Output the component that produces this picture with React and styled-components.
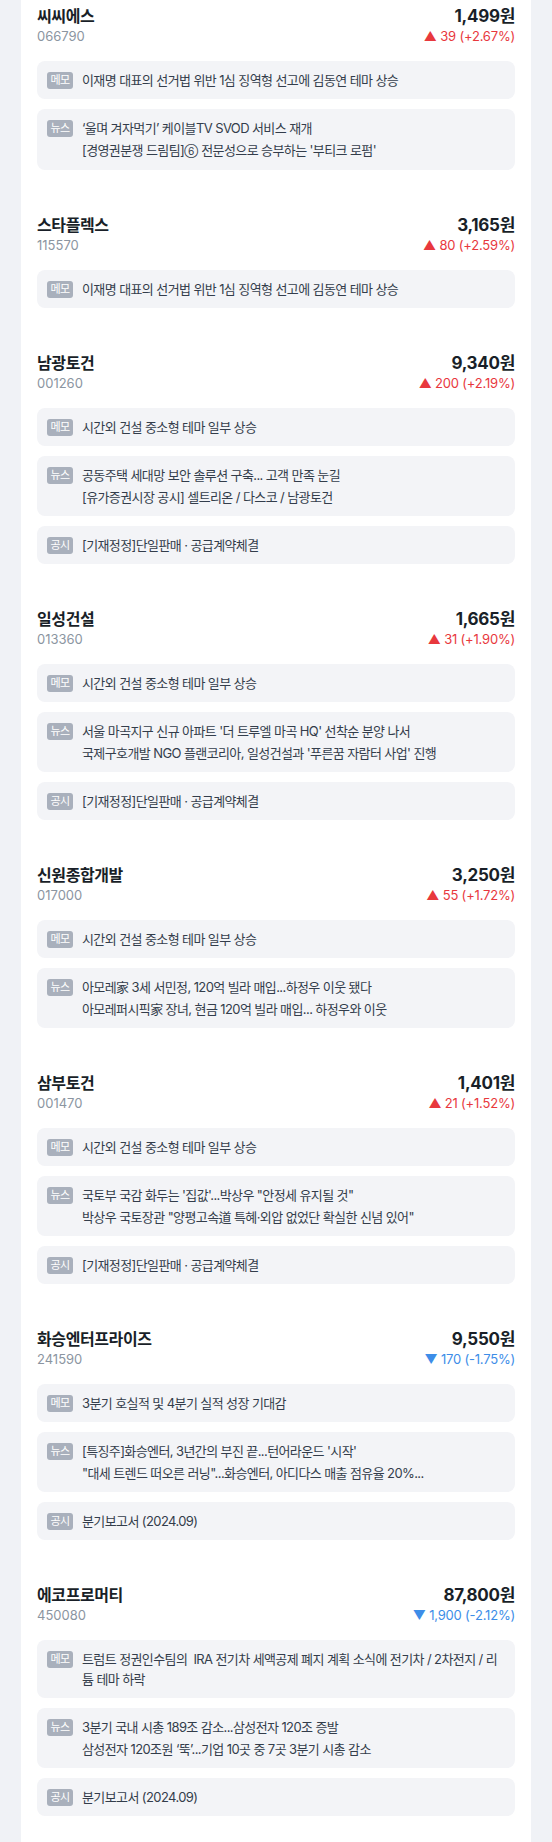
import React from 'react';
import styled, { createGlobalStyle } from 'styled-components';

const GlobalStyle = createGlobalStyle`
  body {
    margin: 0;
    background-color: #f0f2f6;
    font-family: 'Inter', 'Noto Sans CJK KR', sans-serif;
  }
`;

const Panel = styled.div`
  margin: 0 21px;
  padding: 5px 16px 10px;
  min-height: 100vh;
  box-sizing: border-box;
  background-color: #fff;
  display: flex;
  flex-direction: column;
  gap: 44px;
`;

const Section = styled.section`
  display: flex;
  flex-direction: column;
`;

const Header = styled.div`
  display: flex;
  justify-content: space-between;
  align-items: flex-start;
`;

const Side = styled.div`
  display: flex;
  flex-direction: column;
  align-items: ${({ $right }) => ($right ? 'flex-end' : 'flex-start')};
`;

const Name = styled.h3`
  margin: 0;
  font-size: 16px;
  line-height: 22px;
  font-weight: 700;
  letter-spacing: -0.4px;
  color: #191f28;
`;

const Code = styled.span`
  font-size: 13px;
  line-height: 18px;
  color: #8b95a1;
`;

const Price = styled.span`
  font-size: 17px;
  line-height: 22px;
  font-weight: 700;
  letter-spacing: -0.3px;
  color: #191f28;
`;

const Change = styled.span`
  font-size: 13px;
  line-height: 18px;
  letter-spacing: -0.2px;
  color: ${({ $down }) => ($down ? '#3d8de8' : '#e8383d')};
`;

const Items = styled.div`
  margin-top: 16px;
  display: flex;
  flex-direction: column;
  gap: 10px;
`;

const Item = styled.div`
  display: flex;
  align-items: flex-start;
  gap: 9px;
  padding: 9px 13px 9px 10px;
  border-radius: 8px;
  background-color: #f3f4f7;
`;

const Badge = styled.span`
  flex: none;
  width: 26px;
  height: 17px;
  margin-top: 2px;
  border-radius: 3px;
  background-color: #a9b0bc;
  color: #fff;
  font-size: 11px;
  line-height: 17px;
  text-align: center;
  letter-spacing: -0.5px;
`;

const Lines = styled.div`
  display: flex;
  flex-direction: column;
  gap: 2px;
  min-width: 0;
`;

const Line = styled.p`
  margin: 0;
  font-size: 13px;
  line-height: 20px;
  letter-spacing: -0.6px;
  word-break: break-all;
  color: #333d4b;
`;

const Circled = styled.span`
  font-size: 10px;
  letter-spacing: 0;
`;

const BUILD = '시간외 건설 중소형 테마 일부 상승';
const LEE = '이재명 대표의 선거법 위반 1심 징역형 선고에 김동연 테마 상승';
const CONTRACT = '[기재정정]단일판매 · 공급계약체결';
const REPORT = '분기보고서 (2024.09)';

const stocks = [
  {
    name: '씨씨에스', code: '066790', price: '1,499원', change: '39 (+2.67%)',
    memo: LEE,
    news: [
      '‘울며 겨자먹기’ 케이블TV SVOD 서비스 재개',
      <>[경영권분쟁 드림팀]<Circled>⑥</Circled> 전문성으로 승부하는 '부티크 로펌'</>,
    ],
  },
  { name: '스타플렉스', code: '115570', price: '3,165원', change: '80 (+2.59%)', memo: LEE },
  {
    name: '남광토건', code: '001260', price: '9,340원', change: '200 (+2.19%)',
    memo: BUILD,
    news: ['공동주택 세대망 보안 솔루션 구축... 고객 만족 눈길', '[유가증권시장 공시] 셀트리온 / 다스코 / 남광토건'],
    notice: CONTRACT,
  },
  {
    name: '일성건설', code: '013360', price: '1,665원', change: '31 (+1.90%)',
    memo: BUILD,
    news: ["서울 마곡지구 신규 아파트 '더 트루엘 마곡 HQ' 선착순 분양 나서", "국제구호개발 NGO 플랜코리아, 일성건설과 '푸른꿈 자람터 사업' 진행"],
    notice: CONTRACT,
  },
  {
    name: '신원종합개발', code: '017000', price: '3,250원', change: '55 (+1.72%)',
    memo: BUILD,
    news: ['아모레家 3세 서민정, 120억 빌라 매입...하정우 이웃 됐다', '아모레퍼시픽家 장녀, 현금 120억 빌라 매입... 하정우와 이웃'],
  },
  {
    name: '삼부토건', code: '001470', price: '1,401원', change: '21 (+1.52%)',
    memo: BUILD,
    news: ["국토부 국감 화두는 '집값'...박상우 \"안정세 유지될 것\"", '박상우 국토장관 "양평고속道 특혜·외압 없었단 확실한 신념 있어"'],
    notice: CONTRACT,
  },
  {
    name: '화승엔터프라이즈', code: '241590', price: '9,550원', change: '170 (-1.75%)', down: true,
    memo: '3분기 호실적 및 4분기 실적 성장 기대감',
    news: ["[특징주]화승엔터, 3년간의 부진 끝...턴어라운드 '시작'", '"대세 트렌드 떠오른 러닝"...화승엔터, 아디다스 매출 점유율 20%...'],
    notice: REPORT,
  },
  {
    name: '에코프로머티', code: '450080', price: '87,800원', change: '1,900 (-2.12%)', down: true,
    memo: '트럼트 정권인수팀의 \u00a0IRA 전기차 세액공제 폐지 계획 소식에 전기차 / 2차전지 / 리튬 테마 하락',
    news: ['3분기 국내 시총 189조 감소...삼성전자 120조 증발', '삼성전자 120조원 ‘뚝’...기업 10곳 중 7곳 3분기 시총 감소'],
    notice: REPORT,
  },
];

const Entry = ({ label, lines }) => (
  <Item>
    <Badge>{label}</Badge>
    <Lines>
      {lines.map((text, i) => (
        <Line key={i}>{text}</Line>
      ))}
    </Lines>
  </Item>
);

const Stock = ({ stock }) => (
  <Section>
    <Header>
      <Side>
        <Name>{stock.name}</Name>
        <Code>{stock.code}</Code>
      </Side>
      <Side $right>
        <Price>{stock.price}</Price>
        <Change $down={stock.down}>
          {stock.down ? '▼' : '▲'} {stock.change}
        </Change>
      </Side>
    </Header>
    <Items>
      {stock.memo && <Entry label="메모" lines={[stock.memo]} />}
      {stock.news && <Entry label="뉴스" lines={stock.news} />}
      {stock.notice && <Entry label="공시" lines={[stock.notice]} />}
    </Items>
  </Section>
);

const App = () => (
  <>
    <GlobalStyle />
    <Panel>
      {stocks.map((stock) => (
        <Stock key={stock.code} stock={stock} />
      ))}
    </Panel>
  </>
);

export default App;
